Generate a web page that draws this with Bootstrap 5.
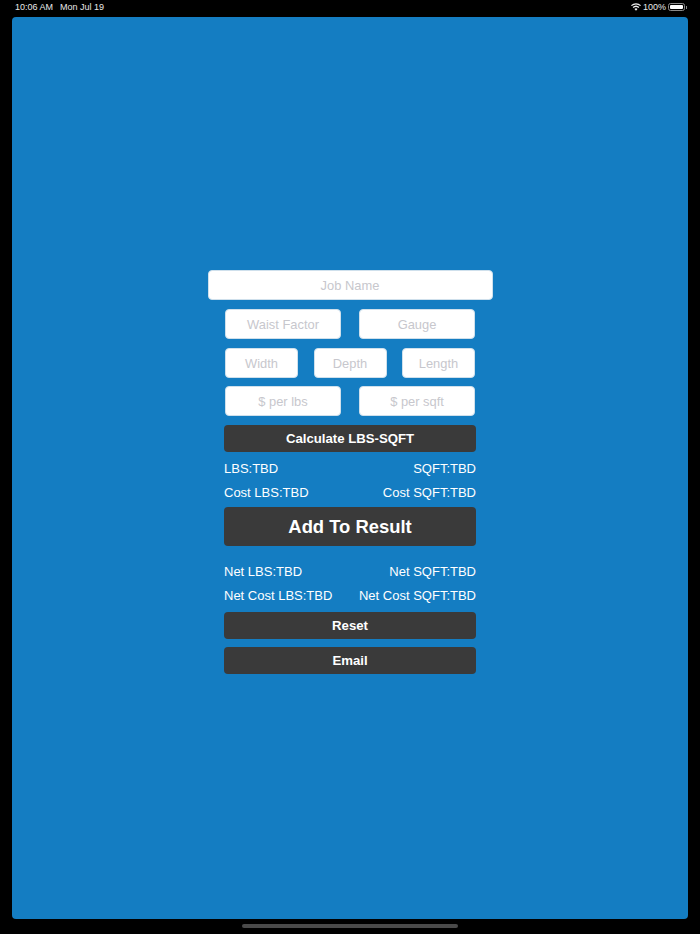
<!DOCTYPE html>
<html lang="en">
<head>
<meta charset="utf-8">
<title>LBS-SQFT Calculator</title>
<link href="https://cdn.jsdelivr.net/npm/bootstrap@5.3.0/dist/css/bootstrap.min.css" rel="stylesheet">
<style>
html, body { height: 100%; }
body { background: #000; font-family: "Liberation Sans", Arial, sans-serif; color: #fff; overflow: hidden; }
.screen { width: 700px; height: 934px; }
.status-strip { height: 17px; padding: 0 12px 3px 15px; font-size: 9px; color: #e8e8e8; line-height: 13px; }
.status-time { margin-right: 7px; }
.wifi-glyph { width: 10px; height: 8px; margin-right: 2px; }
.batt-shell { width: 17px; height: 8px; border: 1px solid #8a8a8a; border-radius: 2.5px; padding: 1px; margin-left: 2px; }
.batt-fill { height: 100%; background: #fff; border-radius: 1px; }
.batt-tip { width: 1px; height: 3px; background: #8a8a8a; margin-left: 1px; margin-right: 1px; }
.panel-blue { margin: 0 12px; height: 902px; background: #147dc2; border-radius: 4px; padding-top: 253px; }
.form-col { width: 252px; }
.job-wrap { width: 285px; }
.field { height: 30px; padding: 0 4px; font-size: 12.9px; text-align: center; border: 1px solid #cfe0ec; border-radius: 4px; background: #fff; box-shadow: none; }
.field::placeholder { color: #c7c7cd; opacity: 1; }
.field-wide { width: 116px; }
.field-narrow { width: 73px; }
.row-two { padding: 0 1px; }
.gap-row { margin-top: 9px; }
.gap-tight { margin-top: 8px; }
.act { display: block; width: 100%; background: #3a3a3a; color: #fff; border: 0; border-radius: 4px; font-weight: 700; padding: 0; height: 27px; font-size: 13.2px; line-height: 27px; }
.act:hover, .act:focus { background: #3a3a3a; color: #fff; }
.act-big { height: 39px; line-height: 40px; font-size: 18.4px; margin-top: 6px; }
.read-row { font-size: 13px; line-height: 16px; color: #fff; }
.read-first { margin-top: 9px; }
.read-net { margin-top: 18px; }
.bottom-strip { height: 15px; }
.home-pill { width: 216px; height: 4px; background: #4a4a4a; border-radius: 2px; margin-top: 5px; }
</style>
</head>
<body>
<div class="screen d-flex flex-column">
  <div class="status-strip d-flex align-items-center justify-content-between">
    <div class="d-flex"><span class="status-time">10:06 AM</span><span>Mon Jul 19</span></div>
    <div class="d-flex align-items-center">
      <svg class="wifi-glyph" viewBox="0 0 20 16" aria-hidden="true"><path fill="#f2f2f2" d="M10 15.5 6.9 12a4.6 4.6 0 0 1 6.2 0zM5.2 10.1 3.3 8a10 10 0 0 1 13.4 0l-1.9 2.1a7.2 7.2 0 0 0-9.6 0zM1.7 6.2 0 4.3a14.9 14.9 0 0 1 20 0l-1.7 1.9a12.4 12.4 0 0 0-16.6 0z"/></svg>
      <span>100%</span>
      <div class="batt-shell"><div class="batt-fill"></div></div>
      <div class="batt-tip"></div>
    </div>
  </div>

  <div class="panel-blue d-flex flex-column align-items-center">
    <div class="job-wrap"><input class="form-control field" type="text" placeholder="Job Name"></div>
    <div class="form-col">
      <div class="d-flex justify-content-between row-two gap-row">
        <input class="form-control field field-wide" type="text" placeholder="Waist Factor">
        <input class="form-control field field-wide" type="text" placeholder="Gauge">
      </div>
      <div class="d-flex justify-content-between row-two gap-row">
        <input class="form-control field field-narrow" type="text" placeholder="Width">
        <input class="form-control field field-narrow" type="text" placeholder="Depth">
        <input class="form-control field field-narrow" type="text" placeholder="Length">
      </div>
      <div class="d-flex justify-content-between row-two gap-tight">
        <input class="form-control field field-wide" type="text" placeholder="$ per lbs">
        <input class="form-control field field-wide" type="text" placeholder="$ per sqft">
      </div>
      <button class="btn act gap-row" type="button">Calculate LBS-SQFT</button>
      <div class="d-flex justify-content-between read-row read-first"><span>LBS:TBD</span><span>SQFT:TBD</span></div>
      <div class="d-flex justify-content-between read-row mt-2"><span>Cost LBS:TBD</span><span>Cost SQFT:TBD</span></div>
      <button class="btn act act-big" type="button">Add To Result</button>
      <div class="d-flex justify-content-between read-row read-net"><span>Net LBS:TBD</span><span>Net SQFT:TBD</span></div>
      <div class="d-flex justify-content-between read-row mt-2"><span>Net Cost LBS:TBD</span><span>Net Cost SQFT:TBD</span></div>
      <button class="btn act mt-2" type="button">Reset</button>
      <button class="btn act mt-2" type="button">Email</button>
    </div>
  </div>
  <div class="bottom-strip d-flex justify-content-center"><div class="home-pill"></div></div>
</div>
<script src="https://cdn.jsdelivr.net/npm/bootstrap@5.3.0/dist/js/bootstrap.bundle.min.js"></script>
</body>
</html>
